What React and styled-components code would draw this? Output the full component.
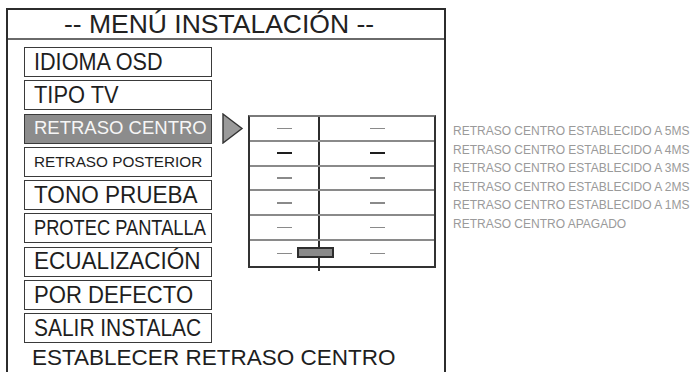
import React from 'react';
import styled, { createGlobalStyle } from 'styled-components';

const GlobalStyle = createGlobalStyle`
  html, body {
    margin: 0;
    padding: 0;
    background: #ffffff;
    font-family: "Liberation Sans", Arial, sans-serif;
  }
`;

// squeeze = horizontal scale, the printed menu uses a condensed face
const menuItems = [
  { label: 'IDIOMA OSD', size: 23, squeeze: 0.94 },
  { label: 'TIPO TV', size: 23, squeeze: 0.95 },
  { label: 'RETRASO CENTRO', size: 18.5, active: true },
  { label: 'RETRASO POSTERIOR', size: 15.3 },
  { label: 'TONO PRUEBA', size: 23, squeeze: 0.98 },
  { label: 'PROTEC PANTALLA', size: 22, squeeze: 0.83 },
  { label: 'ECUALIZACIÓN', size: 23, squeeze: 0.98 },
  { label: 'POR DEFECTO', size: 23, squeeze: 0.96 },
  { label: 'SALIR INSTALAC', size: 23, squeeze: 0.91 },
];

const notes = [
  'RETRASO CENTRO ESTABLECIDO A 5MS',
  'RETRASO CENTRO ESTABLECIDO A 4MS',
  'RETRASO CENTRO ESTABLECIDO A 3MS',
  'RETRASO CENTRO ESTABLECIDO A 2MS',
  'RETRASO CENTRO ESTABLECIDO A 1MS',
  'RETRASO CENTRO APAGADO',
];

const App = () => {
  return (
    <>
      <GlobalStyle />
      <Page>
        <Frame>
          <TitleBar>-- MENÚ INSTALACIÓN --</TitleBar>
          <Body>
            <Menu>
              {menuItems.map((item) => (
                <MenuItem key={item.label} $active={item.active} $size={item.size}>
                  <Label $squeeze={item.squeeze || 1}>{item.label}</Label>
                </MenuItem>
              ))}
            </Menu>
            <SubPanel>
              <Pointer width="22" height="31" viewBox="0 0 22 31">
                <polygon
                  points="1,1 20,15.5 1,30"
                  fill="#9a9a9a"
                  stroke="#333"
                  strokeWidth="1.4"
                />
              </Pointer>
              <LevelTable>
                {notes.map((n, i) => (
                  <LevelRow key={n} $last={i === notes.length - 1}>
                    <LeftCell>
                      <Dash $dark={i === 1} />
                    </LeftCell>
                    <RightCell $last={i === notes.length - 1}>
                      <Dash $dark={i === 1} />
                    </RightCell>
                    {i === notes.length - 1 && <Slider />}
                  </LevelRow>
                ))}
              </LevelTable>
            </SubPanel>
          </Body>
          <Footer>ESTABLECER RETRASO CENTRO</Footer>
        </Frame>
        <Notes>
          {notes.map((n) => (
            <Note key={n}>{n}</Note>
          ))}
        </Notes>
      </Page>
    </>
  );
};

export default App;

const Page = styled.div`
  display: flex;
  align-items: flex-start;
  width: 698px;
  height: 372px;
  overflow: hidden;
  padding: 8px 0 0 6px;
  box-sizing: border-box;
`;

const Frame = styled.div`
  width: 440px;
  height: 372px;
  box-sizing: border-box;
  border: 2px solid #2c2c2c;
  border-bottom: none;
  display: flex;
  flex-direction: column;
`;

const TitleBar = styled.div`
  height: 30px;
  box-sizing: border-box;
  border-bottom: 2px solid #6a6a6a;
  display: flex;
  align-items: center;
  justify-content: center;
  padding: 1px 14px 0 0;
  font-size: 26.5px;
  color: #222;
  line-height: 1;
  white-space: nowrap;
`;

const Body = styled.div`
  display: flex;
  align-items: flex-start;
  padding: 7px 0 0 16px;
`;

const Menu = styled.div`
  display: flex;
  flex-direction: column;
  gap: 3.3px;
  width: 188px;
`;

const MenuItem = styled.div`
  height: 30px;
  box-sizing: border-box;
  border: 1.5px solid #3a3a3a;
  display: flex;
  align-items: center;
  padding-left: 9px;
  font-size: ${(p) => p.$size}px;
  line-height: 1;
  white-space: nowrap;
  overflow: hidden;
  background: ${(p) => (p.$active ? '#8c8c8c' : '#fff')};
  color: ${(p) => (p.$active ? '#f6f6f6' : '#1e1e1e')};
`;

const Label = styled.span`
  display: inline-block;
  transform: scaleX(${(p) => p.$squeeze});
  transform-origin: left center;
`;

const SubPanel = styled.div`
  display: flex;
  align-items: flex-start;
  padding-top: 66px;
  margin-left: 10px;
`;

const Pointer = styled.svg`
  display: block;
  flex: none;
`;

const LevelTable = styled.div`
  margin-left: 4px;
  margin-top: 2px;
  width: 188px;
  box-sizing: border-box;
  border: 2px solid #333;
  border-top-color: #7a7a7a;
  display: flex;
  flex-direction: column;
`;

const LevelRow = styled.div`
  position: relative;
  display: flex;
  height: 24.8px;
  box-sizing: border-box;
  border-bottom: ${(p) => (p.$last ? 'none' : '2px solid #8a8a8a')};
`;

const LeftCell = styled.div`
  width: 68px;
  display: flex;
  align-items: center;
  justify-content: center;
`;

const RightCell = styled.div`
  position: relative;
  flex: 1;
  border-left: 2px solid #2c2c2c;
  display: flex;
  align-items: center;
  justify-content: center;

  ${(p) =>
    p.$last &&
    `
    &::after {
      content: '';
      position: absolute;
      left: -2px;
      bottom: -5px;
      width: 2px;
      height: 5px;
      background: #2c2c2c;
    }
  `}
`;

const Dash = styled.span`
  display: block;
  width: 15px;
  height: 1.5px;
  background: ${(p) => (p.$dark ? '#1e1e1e' : '#8a8a8a')};
`;

const Slider = styled.span`
  position: absolute;
  left: 47px;
  top: 6px;
  width: 37px;
  height: 11px;
  box-sizing: border-box;
  background: #8a8a8a;
  border: 2px solid #2e2e2e;
`;

const Footer = styled.div`
  padding: 4px 0 0 24px;
  font-size: 22.5px;
  line-height: 1;
  color: #1e1e1e;
  white-space: nowrap;
`;

const Notes = styled.div`
  margin-left: 7px;
  padding-top: 114px;
  display: flex;
  flex-direction: column;
`;

const Note = styled.div`
  font-size: 12px;
  line-height: 18.6px;
  color: #9a9a9a;
  white-space: nowrap;
`;
